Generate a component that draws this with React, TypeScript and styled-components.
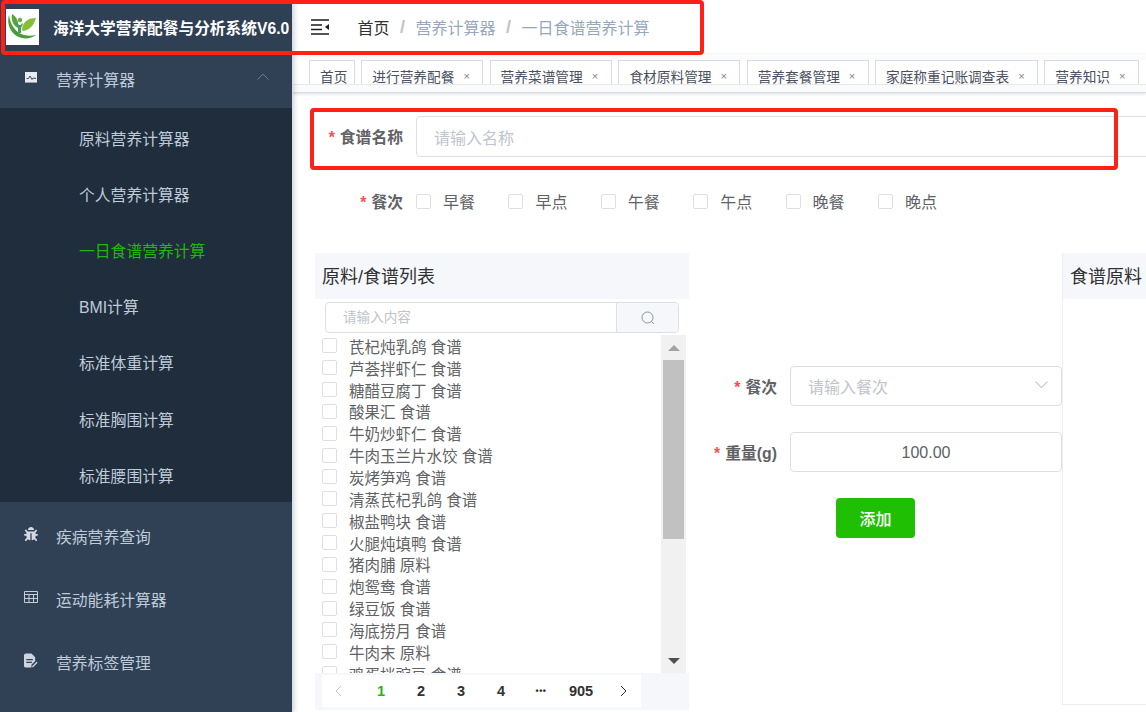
import React from "react";
import styled, { createGlobalStyle } from "styled-components";
import { FaBug } from "react-icons/fa";

const GlobalStyle = createGlobalStyle`
  html, body {
    margin: 0;
    padding: 0;
    background: #fff;
    overflow: hidden;
  }
  * {
    box-sizing: border-box;
  }
  body {
    font-family: "Liberation Sans", "Noto Sans CJK SC", sans-serif;
  }
`;

const Page = styled.div`
  position: relative;
  display: flex;
  width: 1146px;
  height: 712px;
  overflow: hidden;
`;

/* sidebar */
const Sidebar = styled.aside`
  flex: 0 0 293px;
  background: #304156;
  border-right: 1px solid #d8dce5;
  box-shadow: 2px 0 4px rgba(0, 21, 41, 0.15);
  z-index: 2;
`;

const LogoBar = styled.div`
  display: flex;
  align-items: center;
  height: 54px;
  padding-left: 6px;
  gap: 14px;
  background: #2f3f54;
`;

const LogoBox = styled.div`
  display: flex;
  width: 33px;
  height: 36px;
  background: #fff;
`;

const LogoTitle = styled.span`
  color: #fff;
  font-size: 15.7px;
  font-weight: 700;
  white-space: nowrap;
`;

const MenuRow = styled.div<{ $h: number; $pb?: number }>`
  display: flex;
  align-items: center;
  height: ${(p) => p.$h}px;
  padding-left: 24px;
  padding-bottom: ${(p) => p.$pb ?? 0}px;
  color: #bfcbd9;
  font-size: 15.8px;
`;

const MenuIcon = styled.span`
  display: flex;
  justify-content: center;
  width: 14px;
  margin-right: 18px;
  margin-top: -5px;
  color: #d3dae3;
`;

const Caret = styled.span`
  display: flex;
  margin-left: auto;
  margin-right: 23px;
  margin-top: -6px;
`;

const SelectCaret = styled.span`
  display: flex;
  margin-left: auto;
  margin-right: -4px;
  margin-top: -2px;
`;

const SubMenu = styled.div`
  padding-top: 2px;
  background: #1f2d3d;
  height: 394px;
`;

const SubRow = styled.div<{ $active?: boolean }>`
  display: flex;
  align-items: center;
  height: 56.2px;
  padding-left: 79px;
  font-size: 15.8px;
  color: ${(p) => (p.$active ? "#1fba05" : "#bfcbd9")};
`;

const BottomMenu = styled.div`
  padding-top: 3px;
`;

/* right side */
const Main = styled.main`
  flex: 1;
  min-width: 0;
  display: flex;
  flex-direction: column;
`;

const Navbar = styled.div`
  display: flex;
  align-items: center;
  flex: 0 0 54px;
  padding-left: 18px;
  box-shadow: 0 1px 4px rgba(0, 21, 41, 0.08);
`;

const Crumbs = styled.div`
  display: flex;
  align-items: center;
  margin-left: 28.5px;
  font-size: 16px;
  color: #97a8be;
`;

const CrumbHome = styled.span`
  color: #303133;
`;

const CrumbSep = styled.span`
  margin: 0 10.5px;
  font-size: 18px;
  font-weight: 700;
  color: #c0c4cc;
`;

const TagsBar = styled.div`
  flex: 0 0 39px;
  padding-top: 6px;
  background: #fbfbfb;
  border-bottom: 1px solid #d8dce5;
  box-shadow: 0 1px 3px rgba(0, 0, 0, 0.12), 0 0 3px rgba(0, 0, 0, 0.04);
`;

const TagStrip = styled.div`
  display: flex;
  height: 25px;
  padding-left: 16px;
  gap: 6.3px;
  background: #fff;
  overflow: hidden;
  border-bottom: 1px solid #e6e8ee;
`;

const Tag = styled.div<{ $w: number }>`
  display: flex;
  align-items: center;
  flex: 0 0 ${(p) => p.$w}px;
  height: 30px;
  padding: 0 0 0 10px;
  border: 1px solid #d8dce5;
  border-bottom: none;
  font-size: 13.7px;
  color: #495060;
  white-space: nowrap;
`;

const TagClose = styled.span`
  margin-left: 9px;
  font-size: 11px;
  color: #7d8594;
`;

const Content = styled.div`
  flex: 1;
  min-height: 0;
  padding: 23px 0 0 22px;
`;

const FormRow = styled.div<{ $mb: number }>`
  display: flex;
  align-items: center;
  margin-bottom: ${(p) => p.$mb}px;
  white-space: nowrap;
`;

const Label = styled.label<{ $w: number }>`
  flex: 0 0 ${(p) => p.$w}px;
  padding-right: 13px;
  text-align: right;
  font-size: 15.8px;
  font-weight: 700;
  color: #606266;
`;

const Star = styled.i`
  margin-right: 5px;
  font-style: normal;
  color: #ff4d4f;
`;

const TextInput = styled.div<{ $w: number; $h: number; $center?: boolean; $muted?: boolean }>`
  display: flex;
  align-items: center;
  justify-content: ${(p) => (p.$center ? "center" : "flex-start")};
  flex: 0 0 ${(p) => p.$w}px;
  height: ${(p) => p.$h}px;
  padding: ${(p) => (p.$center ? "2px 0 0" : "0 17px")};
  background: #fff;
  border: 1px solid #dcdfe6;
  border-radius: 4px;
  font-size: 16px;
  color: ${(p) => (p.$muted ? "#c0c4cc" : "#606266")};
`;

const CheckGroup = styled.div`
  display: flex;
`;

const CheckOption = styled.div`
  display: flex;
  align-items: center;
  width: 92.4px;
  font-size: 16px;
  color: #606266;
`;

const Box = styled.span`
  flex: 0 0 15px;
  height: 15px;
  margin-right: 12px;
  background: #fff;
  border: 1px solid #dcdfe6;
  border-radius: 2px;
`;

const Transfer = styled.div`
  display: flex;
  align-items: flex-start;
  padding-top: 40px;
`;

const ListPanel = styled.section`
  flex: 0 0 374px;
  height: 457px;
  background: #f5f7fa;
`;

const PanelHead = styled.div`
  display: flex;
  align-items: center;
  height: 46px;
  padding: 0 0 2px 7px;
  background: #f5f7fa;
  font-size: 18px;
  color: #303133;
  white-space: nowrap;
`;

const ListBody = styled.div`
  height: 374px;
  padding: 3px 3px 0 7px;
  background: #fff;
`;

const SearchBox = styled.div`
  display: flex;
  height: 31px;
  margin: 0 7px 0 3px;
  border: 1px solid #dcdfe6;
  border-radius: 4px;
  overflow: hidden;
`;

const SearchField = styled.div`
  flex: 1;
  padding-left: 17px;
  font-size: 13.6px;
  line-height: 29px;
  color: #c0c4cc;
`;

const SearchBtn = styled.div`
  display: flex;
  align-items: center;
  justify-content: center;
  flex: 0 0 62px;
  background: #f5f7fa;
  border-left: 1px solid #dcdfe6;
`;

const ScrollArea = styled.div`
  display: flex;
  height: 338px;
  margin-top: 2px;
  overflow: hidden;
`;

const Rows = styled.div`
  flex: 1;
  overflow: hidden;
`;

const ItemRow = styled.div`
  display: flex;
  align-items: center;
  height: 21.85px;
  font-size: 15.5px;
  color: #606266;
  white-space: nowrap;
`;

const Scrollbar = styled.div`
  display: flex;
  flex-direction: column;
  align-items: center;
  flex: 0 0 25px;
  background: #f1f1f1;
`;

const ScrollCap = styled.div`
  display: flex;
  align-items: center;
  justify-content: center;
  flex: 0 0 25px;
  width: 100%;
`;

const ScrollThumb = styled.div`
  flex: 0 0 179px;
  width: 21px;
  background: #c1c1c1;
`;

const ScrollRest = styled.div`
  flex: 1;
`;

const PagerBar = styled.div`
  display: flex;
  width: 319px;
  height: 32px;
  margin: 2px 0 0 7px;
  background: #fff;
  align-items: center;
  font-size: 14.5px;
  font-weight: 700;
  color: #303133;
`;

const PagerItem = styled.span<{ $w: number; $pl?: number; $pr?: number; $active?: boolean; $muted?: boolean }>`
  display: flex;
  align-items: center;
  justify-content: center;
  flex: 0 0 ${(p) => p.$w}px;
  padding-left: ${(p) => p.$pl ?? 0}px;
  padding-right: ${(p) => p.$pr ?? 0}px;
  color: ${(p) => (p.$active ? "#1fba05" : p.$muted ? "#c0c4cc" : "#303133")};
`;

const PagerDots = styled(PagerItem)`
  font-size: 9px;
  letter-spacing: 0.5px;
`;

const MidForm = styled.div`
  flex: 0 0 373px;
  padding-top: 113px;
`;

const AddRow = styled.div`
  display: flex;
  padding-left: 147px;
`;

const AddButton = styled.button`
  width: 79px;
  height: 40px;
  border: none;
  border-radius: 4px;
  background: #1fbf03;
  color: #fff;
  font-family: inherit;
  font-size: 16px;
  font-weight: 500;
`;

const RecipePanel = styled.section`
  flex: 0 0 90px;
  height: 452px;
  border-left: 1px solid #ebeef5;
  border-bottom: 1px solid #ebeef5;
`;

/* red marks drawn on top of the screenshot */
const Mark = styled.div<{ $l: number; $t: number; $w: number; $h: number }>`
  position: absolute;
  left: ${(p) => p.$l}px;
  top: ${(p) => p.$t}px;
  width: ${(p) => p.$w}px;
  height: ${(p) => p.$h}px;
  border: 4px solid #ff2116;
  border-radius: 4px;
  z-index: 5;
  pointer-events: none;
`;

const tags = [
  { name: "首页", w: 46 },
  { name: "进行营养配餐", w: 122, close: true },
  { name: "营养菜谱管理", w: 122.5, close: true },
  { name: "食材原料管理", w: 122, close: true },
  { name: "营养套餐管理", w: 122, close: true },
  { name: "家庭称重记账调查表", w: 163, close: true },
  { name: "营养知识", w: 95, close: true },
  { name: "", w: 60 },
];

const subItems = [
  "原料营养计算器",
  "个人营养计算器",
  "一日食谱营养计算",
  "BMI计算",
  "标准体重计算",
  "标准胸围计算",
  "标准腰围计算",
];

const meals = ["早餐", "早点", "午餐", "午点", "晚餐", "晚点"];

const foods = [
  "芪杞炖乳鸽 食谱",
  "芦荟拌虾仁 食谱",
  "糖醋豆腐丁 食谱",
  "酸果汇 食谱",
  "牛奶炒虾仁 食谱",
  "牛肉玉兰片水饺 食谱",
  "炭烤笋鸡 食谱",
  "清蒸芪杞乳鸽 食谱",
  "椒盐鸭块 食谱",
  "火腿炖填鸭 食谱",
  "猪肉脯 原料",
  "炮鸳鸯 食谱",
  "绿豆饭 食谱",
  "海底捞月 食谱",
  "牛肉末 原料",
  "鸡蛋拌豌豆 食谱",
];

function Logo() {
  return (
    <LogoBox>
      <svg width="33" height="36" viewBox="0 0 33 36">
        <path d="M3 6C0 16 6 27 16 29c5 1 10 0 14-3-5 1-10 1-15-1C9 22 4 15 3 6z" fill="#4a9d33" />
        <path d="M6 5c-1 6 1 12 6 14 1-6-1-11-6-14z" fill="#5aa53a" />
        <path d="M30 9c-7 0-13 3-14 11 0 1 0 1 1 2 7-1 11-6 13-13z" fill="#86bf3a" />
        <circle cx="14" cy="11" r="2.200" fill="#63b24b" />
        <path d="M10 13l3 3h2l1-2 1 1-2 4v5h-3v-6l-3-4z" fill="#43a05a" />
      </svg>
    </LogoBox>
  );
}

function ChartIcon() {
  return (
    <svg width="12" height="11" viewBox="0 0 12 11">
      <rect width="12" height="11" fill="#e6ebf0" />
      <path d="M0 10.500h12" stroke="#8fa3b8" />
      <path d="M1.500 6.500l2 0 1.500-2.500 2 3.500 1-1.500 3 0.500" fill="none" stroke="#3b4c62" strokeWidth="1" />
    </svg>
  );
}

function TableIcon() {
  return (
    <svg width="14" height="12" viewBox="0 0 14 12" fill="none" stroke="#c4ced9">
      <path d="M.5.500h13v11H.500zM.500 3.500h13M.500 7.500h13M5 3.500v8M9.500 3.500v8" />
    </svg>
  );
}

function NoteIcon() {
  return (
    <svg width="15" height="15" viewBox="0 0 15 15">
      <path d="M2 0h6l4 4v4l-4 4v3H2a2 2 0 0 1-2-2V2a2 2 0 0 1 2-2z" fill="#cdd5de" />
      <path d="M2.500 6.500h7M2.500 9.500h6" stroke="#304156" strokeWidth="1.200" />
      <path d="M9 14.500l5-5" stroke="#cdd5de" strokeWidth="1.500" />
    </svg>
  );
}

function Chevron({ up, color, size = 12 }: { up?: boolean; color: string; size?: number }) {
  return (
    <svg width={size} height={size * 0.6} viewBox="0 0 12 7" fill="none" stroke={color} strokeWidth="1">
      <path d={up ? "M.5 6.500L6 1l5.500 5.500" : "M.5.500L6 6l5.500-5.500"} />
    </svg>
  );
}

function App() {
  return (
    <Page>
      <GlobalStyle />
      <Sidebar>
        <LogoBar>
          <Logo />
          <LogoTitle>海洋大学营养配餐与分析系统V6.0</LogoTitle>
        </LogoBar>
        <MenuRow $h={54} $pb={3}>
          <MenuIcon>
            <ChartIcon />
          </MenuIcon>
          营养计算器
          <Caret>
            <Chevron up color="#6f7f92" />
          </Caret>
        </MenuRow>
        <SubMenu>
          {subItems.map((s) => (
            <SubRow key={s} $active={s === "一日食谱营养计算"}>
              {s}
            </SubRow>
          ))}
        </SubMenu>
        <BottomMenu>
          <MenuRow $h={63}>
            <MenuIcon>
              <FaBug size={14} />
            </MenuIcon>
            疾病营养查询
          </MenuRow>
          <MenuRow $h={63}>
            <MenuIcon>
              <TableIcon />
            </MenuIcon>
            运动能耗计算器
          </MenuRow>
          <MenuRow $h={63}>
            <MenuIcon>
              <NoteIcon />
            </MenuIcon>
            营养标签管理
          </MenuRow>
        </BottomMenu>
      </Sidebar>

      <Main>
        <Navbar>
          <svg width="18" height="16" viewBox="0 0 18 16">
            <path d="M0 1h18M0 15h18M0 6h11M0 10.500h11" stroke="#1d1d1f" strokeWidth="1.500" />
            <path d="M18 5v6l-4-3z" fill="#1d1d1f" />
          </svg>
          <Crumbs>
            <CrumbHome>首页</CrumbHome>
            <CrumbSep>/</CrumbSep>
            <span>营养计算器</span>
            <CrumbSep>/</CrumbSep>
            <span>一日食谱营养计算</span>
          </Crumbs>
        </Navbar>
        <TagsBar>
          <TagStrip>
            {tags.map((t, i) => (
              <Tag key={i} $w={t.w}>
                {t.name}
                {t.close && <TagClose>×</TagClose>}
              </Tag>
            ))}
          </TagStrip>
        </TagsBar>

        <Content>
          <FormRow $mb={32}>
            <Label $w={101}>
              <Star>*</Star>食谱名称
            </Label>
            <TextInput $w={760} $h={41} $muted>
              请输入名称
            </TextInput>
          </FormRow>
          <FormRow $mb={0}>
            <Label $w={101}>
              <Star>*</Star>餐次
            </Label>
            <CheckGroup>
              {meals.map((m) => (
                <CheckOption key={m}>
                  <Box />
                  {m}
                </CheckOption>
              ))}
            </CheckGroup>
          </FormRow>

          <Transfer>
            <ListPanel>
              <PanelHead>原料/食谱列表</PanelHead>
              <ListBody>
                <SearchBox>
                  <SearchField>请输入内容</SearchField>
                  <SearchBtn>
                    <svg width="14" height="14" viewBox="0 0 14 14" fill="none" stroke="#8d929b">
                      <circle cx="6.500" cy="6.500" r="5.500" />
                      <path d="M10.500 10.500l2.500 2.500" />
                    </svg>
                  </SearchBtn>
                </SearchBox>
                <ScrollArea>
                  <Rows>
                    {foods.map((f) => (
                      <ItemRow key={f}>
                        <Box />
                        {f}
                      </ItemRow>
                    ))}
                  </Rows>
                  <Scrollbar>
                    <ScrollCap>
                      <svg width="12" height="6" viewBox="0 0 12 6">
                        <path d="M6 0l6 6H0z" fill="#a3a3a3" />
                      </svg>
                    </ScrollCap>
                    <ScrollThumb />
                    <ScrollRest />
                    <ScrollCap>
                      <svg width="12" height="6" viewBox="0 0 12 6">
                        <path d="M0 0h12L6 6z" fill="#505050" />
                      </svg>
                    </ScrollCap>
                  </Scrollbar>
                </ScrollArea>
              </ListBody>
              <PagerBar>
                <PagerItem $w={39} $pr={7} $muted>
                  <svg width="8" height="12" viewBox="0 0 8 12" fill="none" stroke="currentColor">
                    <path d="M7 1L2 6l5 5" />
                  </svg>
                </PagerItem>
                <PagerItem $w={40} $active>
                  1
                </PagerItem>
                <PagerItem $w={40}>2</PagerItem>
                <PagerItem $w={40}>3</PagerItem>
                <PagerItem $w={40}>4</PagerItem>
                <PagerDots $w={40}>•••</PagerDots>
                <PagerItem $w={40}>905</PagerItem>
                <PagerItem $w={40} $pl={6}>
                  <svg width="8" height="12" viewBox="0 0 8 12" fill="none" stroke="currentColor">
                    <path d="M1 1l5 5-5 5" />
                  </svg>
                </PagerItem>
              </PagerBar>
            </ListPanel>

            <MidForm>
              <FormRow $mb={26}>
                <Label $w={101}>
                  <Star>*</Star>餐次
                </Label>
                <TextInput $w={272} $h={40} $muted>
                  请输入餐次
                  <SelectCaret>
                    <Chevron color="#c0c4cc" size={13} />
                  </SelectCaret>
                </TextInput>
              </FormRow>
              <FormRow $mb={26}>
                <Label $w={101}>
                  <Star>*</Star>重量(g)
                </Label>
                <TextInput $w={272} $h={40} $center>
                  100.00
                </TextInput>
              </FormRow>
              <AddRow>
                <AddButton>添加</AddButton>
              </AddRow>
            </MidForm>

            <RecipePanel>
              <PanelHead>食谱原料</PanelHead>
            </RecipePanel>
          </Transfer>
        </Content>
      </Main>

      <Mark $l={1} $t={0} $w={703} $h={55} />
      <Mark $l={310} $t={108} $w={808} $h={62} />
    </Page>
  );
}

export default App;
